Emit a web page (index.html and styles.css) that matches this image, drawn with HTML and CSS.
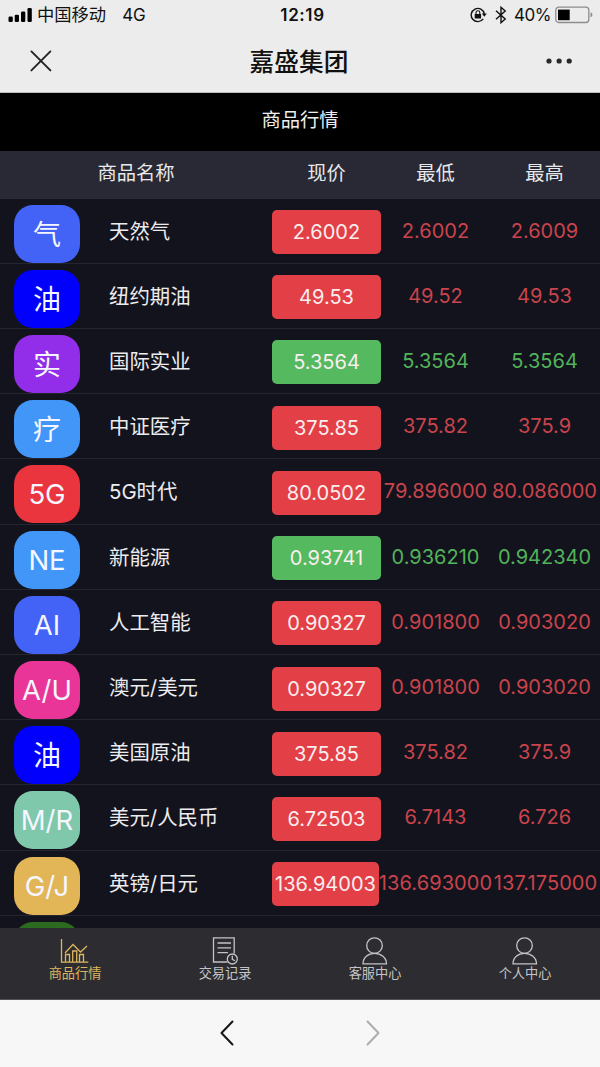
FILE: index.html
```
<!DOCTYPE html>
<html lang="zh-CN">
<head>
<meta charset="utf-8">
<title>嘉盛集团</title>
<link rel="stylesheet" href="styles.css">
</head>
<body>
<div class="screen">
  <header class="chrome">
    <div class="status">
      <div class="status-left">
        <svg class="signal" width="24" height="16" viewBox="0 0 24 16"><rect x="0.500" y="9.5" width="4.3" height="5.500" rx="1.3"/><rect x="6.700" y="7.800" width="4.3" height="7.200" rx="1.3"/><rect x="13" y="4.5" width="4.3" height="10.5" rx="1.3"/><rect x="19.500" y="1" width="4.3" height="14" rx="1.3"/></svg>
        <span class="carrier">中国移动</span><span class="network">4G</span>
      </div>
      <div class="clock">12:19</div>
      <div class="status-right">
        <svg width="18" height="16" viewBox="0 0 18 16" fill="none" stroke="#111" stroke-width="1.4"><path d="M13.2 11.8A6.6 6.6 0 1 1 14.3 6.8"/><path d="M11.8 6.6h5l-2.5 3.2z" fill="#111" stroke="none"/><rect x="4.7" y="7" width="6.4" height="4.6" rx=".6" fill="#111" stroke="none"/><path d="M6 7.2V5.6a1.9 1.9 0 0 1 3.8 0v1.6" stroke-width="1.1"/></svg>
        <svg class="bluetooth" width="12" height="18" viewBox="0 0 12 18" fill="none" stroke="#111" stroke-width="1.4"><path d="M1 4.8l9.2 8.2L6 16.7V1.3L10.2 5 1 13.2"/></svg>
        <span class="percent">40%</span>
        <svg class="battery" width="38" height="18" viewBox="0 0 38 18"><rect x=".8" y="1.2" width="33" height="15.3" rx="3" fill="none" stroke="#8d8d8d" stroke-width="1.3"/><rect x="3" y="3.6" width="11.7" height="10.6" fill="#000"/><path d="M35.5 6.2q2 .8 2 2.6t-2 2.6z" fill="#8d8d8d"/></svg>
      </div>
    </div>
    <div class="titlebar">
      <svg class="close" width="22" height="22" viewBox="0 0 22 22" fill="none" stroke="#222" stroke-width="1.9" stroke-linecap="round"><path d="M1.4 1.4l19 19M20.4 1.4l-19 19"/></svg>
      <h1 class="app-title">嘉盛集团</h1>
      <svg class="more" width="28" height="6" viewBox="0 0 28 6" fill="#282828"><circle cx="3" cy="3" r="2.6"/><circle cx="13.1" cy="3" r="2.6"/><circle cx="23.2" cy="3" r="2.6"/></svg>
    </div>
  </header>
  <div class="page-title">商品行情</div>
  <div class="columns"><span class="col-name">商品名称</span><span>现价</span><span>最低</span><span>最高</span></div>
  <main class="list">
    <div class="row"><span class="badge blue cjk">气</span><span class="name">天然气</span><span class="price">2.6002</span><span class="num">2.6002</span><span class="num">2.6009</span></div>
    <div class="row"><span class="badge deep cjk">油</span><span class="name">纽约期油</span><span class="price">49.53</span><span class="num">49.52</span><span class="num">49.53</span></div>
    <div class="row up"><span class="badge purple cjk">实</span><span class="name">国际实业</span><span class="price">5.3564</span><span class="num">5.3564</span><span class="num">5.3564</span></div>
    <div class="row"><span class="badge sky cjk">疗</span><span class="name">中证医疗</span><span class="price">375.85</span><span class="num">375.82</span><span class="num">375.9</span></div>
    <div class="row"><span class="badge red">5G</span><span class="name">5G时代</span><span class="price">80.0502</span><span class="num">79.896000</span><span class="num">80.086000</span></div>
    <div class="row up"><span class="badge sky">NE</span><span class="name">新能源</span><span class="price">0.93741</span><span class="num">0.936210</span><span class="num">0.942340</span></div>
    <div class="row"><span class="badge blue">AI</span><span class="name">人工智能</span><span class="price">0.90327</span><span class="num">0.901800</span><span class="num">0.903020</span></div>
    <div class="row"><span class="badge pink">A/U</span><span class="name">澳元/美元</span><span class="price">0.90327</span><span class="num">0.901800</span><span class="num">0.903020</span></div>
    <div class="row"><span class="badge deep cjk">油</span><span class="name">美国原油</span><span class="price">375.85</span><span class="num">375.82</span><span class="num">375.9</span></div>
    <div class="row"><span class="badge mint">M/R</span><span class="name">美元/人民币</span><span class="price">6.72503</span><span class="num">6.7143</span><span class="num">6.726</span></div>
    <div class="row wide"><span class="badge gold">G/J</span><span class="name">英镑/日元</span><span class="price">136.94003</span><span class="num">136.693000</span><span class="num">137.175000</span></div>
    <div class="row"><span class="badge green"></span></div>
  </main>
  <nav class="tabs">
    <div class="tab active"><svg width="30" height="30" viewBox="0 0 30 30"><path d="M1.500 2v23.2h26.800M5.500 25V17.5h4V25M12.700 25V14h4V25M19.500 25v-7.500h4V25M5 16l8-8.500 7.500 7.500L27 9"/></svg><span>商品行情</span></div>
    <div class="tab"><svg width="30" height="30" viewBox="0 0 30 30"><path d="M17.500 25H3.500V.8h20.700V16.500M7.500 6h13.500M7.500 10.800h13.500M7.500 15.600h10.500"/><circle cx="22.300" cy="22" r="5"/><path d="M22.300 18.800v3.500l2.700 1.500"/></svg><span>交易记录</span></div>
    <div class="tab"><svg width="30" height="30" viewBox="0 0 30 30"><circle cx="14.500" cy="8.600" r="7.800"/><path d="M3 26.800C3 20.500 8 16.400 14.500 16.400S26.500 20.500 26.500 26.800z"/></svg><span>客服中心</span></div>
    <div class="tab"><svg width="30" height="30" viewBox="0 0 30 30"><circle cx="14.500" cy="8.600" r="7.800"/><path d="M3 26.800C3 20.500 8 16.400 14.500 16.400S26.500 20.500 26.500 26.800z"/></svg><span>个人中心</span></div>
  </nav>
  <footer class="browser-nav">
    <svg width="14" height="26" viewBox="0 0 14 26"><path d="M12.500 1.500L1.500 13l11 11.500" stroke="#161616"/></svg>
    <svg width="14" height="26" viewBox="0 0 14 26"><path d="M1.500 1.500L12.500 13l-11 11.500" stroke="#adadad"/></svg>
  </footer>
</div>
</body>
</html>
```
FILE: styles.css
```
* { box-sizing: border-box; }
body { margin: 0; background: #f7f7f7; font-family: Inter, "Noto Sans CJK SC", sans-serif; }
.screen { width: 600px; height: 1067px; display: flex; flex-direction: column; overflow: hidden; }
.chrome { height: 93px; flex: none; background: #ececec; border-bottom: 1px solid #bdbdbd; color: #111; }
.status { height: 30px; display: grid; grid-template-columns: 1fr 60px 1fr; align-items: center; padding: 0 7px 0 8px; font-size: 17px; line-height: 30px; }
.status-left, .status-right { height: 30px; display: flex; align-items: center; }
.status-right { justify-content: flex-end; }
.signal { fill: #000; }
.carrier { margin-left: 5px; font-size: 17.3px; }
.network { margin-left: 16px; }
.clock { padding-left: 4px; text-align: center; font-weight: 600; letter-spacing: .6px; }
.bluetooth { margin-left: 7px; }
.percent { margin-left: 7px; letter-spacing: -.5px; }
.battery { margin-left: 4px; }
.titlebar { height: 62px; display: grid; grid-template-columns: 100px 1fr 100px; align-items: center; }
.close { margin-left: 30px; }
.app-title { margin: 0; padding: 2px 2px 0 0; text-align: center; font-size: 24.700px; font-weight: 500; line-height: 40px; }
.more { justify-self: end; margin-right: 26px; }
.page-title { height: 58px; flex: none; background: #000; color: #eee; text-align: center; font-size: 19.300px; line-height: 54px; }
.columns, .row { display: grid; grid-template-columns: 272px 109px 109px 109px; }
.columns { height: 47.500px; flex: none; background: #292935; color: #e8e8ea; text-align: center; font-size: 19.300px; line-height: 44px; }
.list { height: 729.500px; flex: none; overflow: hidden; background: #13131d; }
.row { grid-template-columns: 14px 66px 192px 109px 109px 109px; height: 65.230px; border-bottom: 1px solid #252530; color: #c9444c; font-size: 20px; }
.badge { grid-column: 2; height: 58px; margin-top: 6px; border-radius: 19px; color: #f5f6ff; text-align: center; font-size: 27.500px; line-height: 59px; }
.cjk { font-size: 28px; line-height: 60px; }
.name { padding-left: 29px; color: #ececef; font-size: 20.400px; line-height: 65.500px; }
.price { height: 44px; margin-top: 11.500px; border-radius: 5px; background: #e33f46; color: #f9eeee; text-align: center; line-height: 45px; }
.num { display: flex; justify-content: center; line-height: 65.500px; white-space: nowrap; }
.up { color: #52b35a; }
.up .price { background: #55b95f; }
.wide .price { width: 107px; }
.wide .num { letter-spacing: .1px; }
.wide .num:last-child { padding-left: 2px; }
.blue { background: #4263f5; }
.deep { background: #0000fc; }
.purple { background: #922eea; }
.sky { background: #4196f8; }
.red { background: #ea343e; }
.pink { background: #e93598; }
.mint { background: #80c8ab; }
.gold { background: #e2b557; }
.green { background: #2c6a20; }
.tabs { height: 72px; flex: none; display: grid; grid-template-columns: repeat(4, 1fr); background: #2d2c30; border-bottom: 1px solid #555057; }
.tab { display: flex; flex-direction: column; align-items: center; padding-top: 9px; color: #c4c4c8; font-size: 13.200px; line-height: 13px; }
.tab svg { fill: none; stroke: currentColor; stroke-width: 1.300; }
.active { color: #ddb65d; }
.browser-nav { height: 67px; display: flex; align-items: center; justify-content: center; gap: 132px; padding-bottom: 1px; background: #f7f7f7; }
.browser-nav svg { fill: none; stroke-width: 2; stroke-linecap: round; stroke-linejoin: round; }
```
